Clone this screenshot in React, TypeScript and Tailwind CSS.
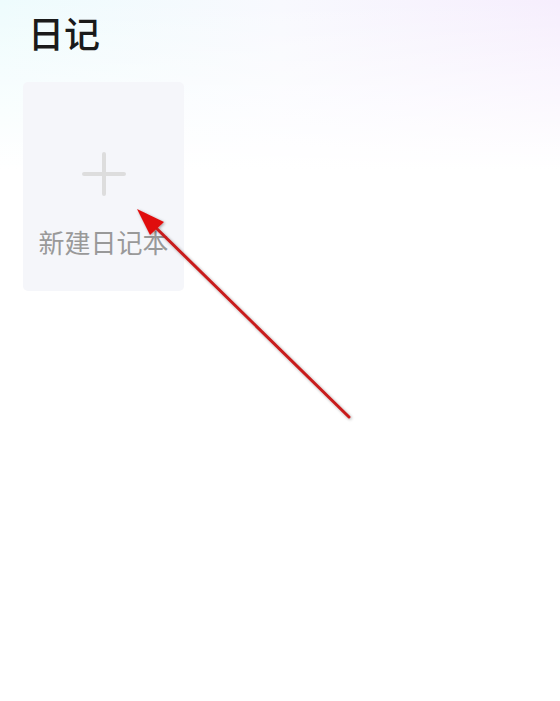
import React from "react";

export default function App() {
  return (
    <div className="relative w-[560px] h-[701px] overflow-hidden bg-white" style={{ fontFamily: '"Noto Sans CJK SC", "Noto Sans", sans-serif' }}>
      <div className="absolute inset-x-0 top-0 h-[170px] bg-gradient-to-r from-[#eefcfd] via-[#f8f9fe] to-[#f6eefd]" />
      <div className="absolute inset-x-0 top-0 h-[170px] bg-gradient-to-b from-transparent to-white" />
      <div className="relative flex flex-col px-[23px] pt-[8px]">
        <h1 className="text-[36px] leading-[48px] text-[#1a1a1a] pl-[5px] font-medium">日记</h1>
        <div className="mt-[26px] w-[161px] h-[209px] rounded-[5px] bg-[#f5f6fa] flex flex-col items-center pt-[70px]">
          <div className="relative w-[44px] h-[44px]">
            <div className="absolute left-0 right-0 top-[20px] h-[4px] rounded bg-[#dddddd]" />
            <div className="absolute top-0 bottom-0 left-[20px] w-[4px] rounded bg-[#dddddd]" />
          </div>
          <div className="mt-[29px] text-[26px] leading-[34px] text-[#999999] whitespace-nowrap">新建日记本</div>
        </div>
      </div>
      <svg className="absolute left-0 top-0" width="560" height="701" viewBox="0 0 560 701">
        <defs>
          <filter id="sh" x="-20%" y="-20%" width="140%" height="140%">
            <feDropShadow dx="1" dy="1" stdDeviation="1.5" floodColor="#000" floodOpacity="0.35" />
          </filter>
        </defs>
        <g filter="url(#sh)">
          <line x1="349" y1="417" x2="150" y2="222" stroke="#c81e1e" strokeWidth="3" strokeLinecap="round" />
          <polygon points="137,209 164,222 150,235" fill="#e01010" />
        </g>
      </svg>
    </div>
  );
}
